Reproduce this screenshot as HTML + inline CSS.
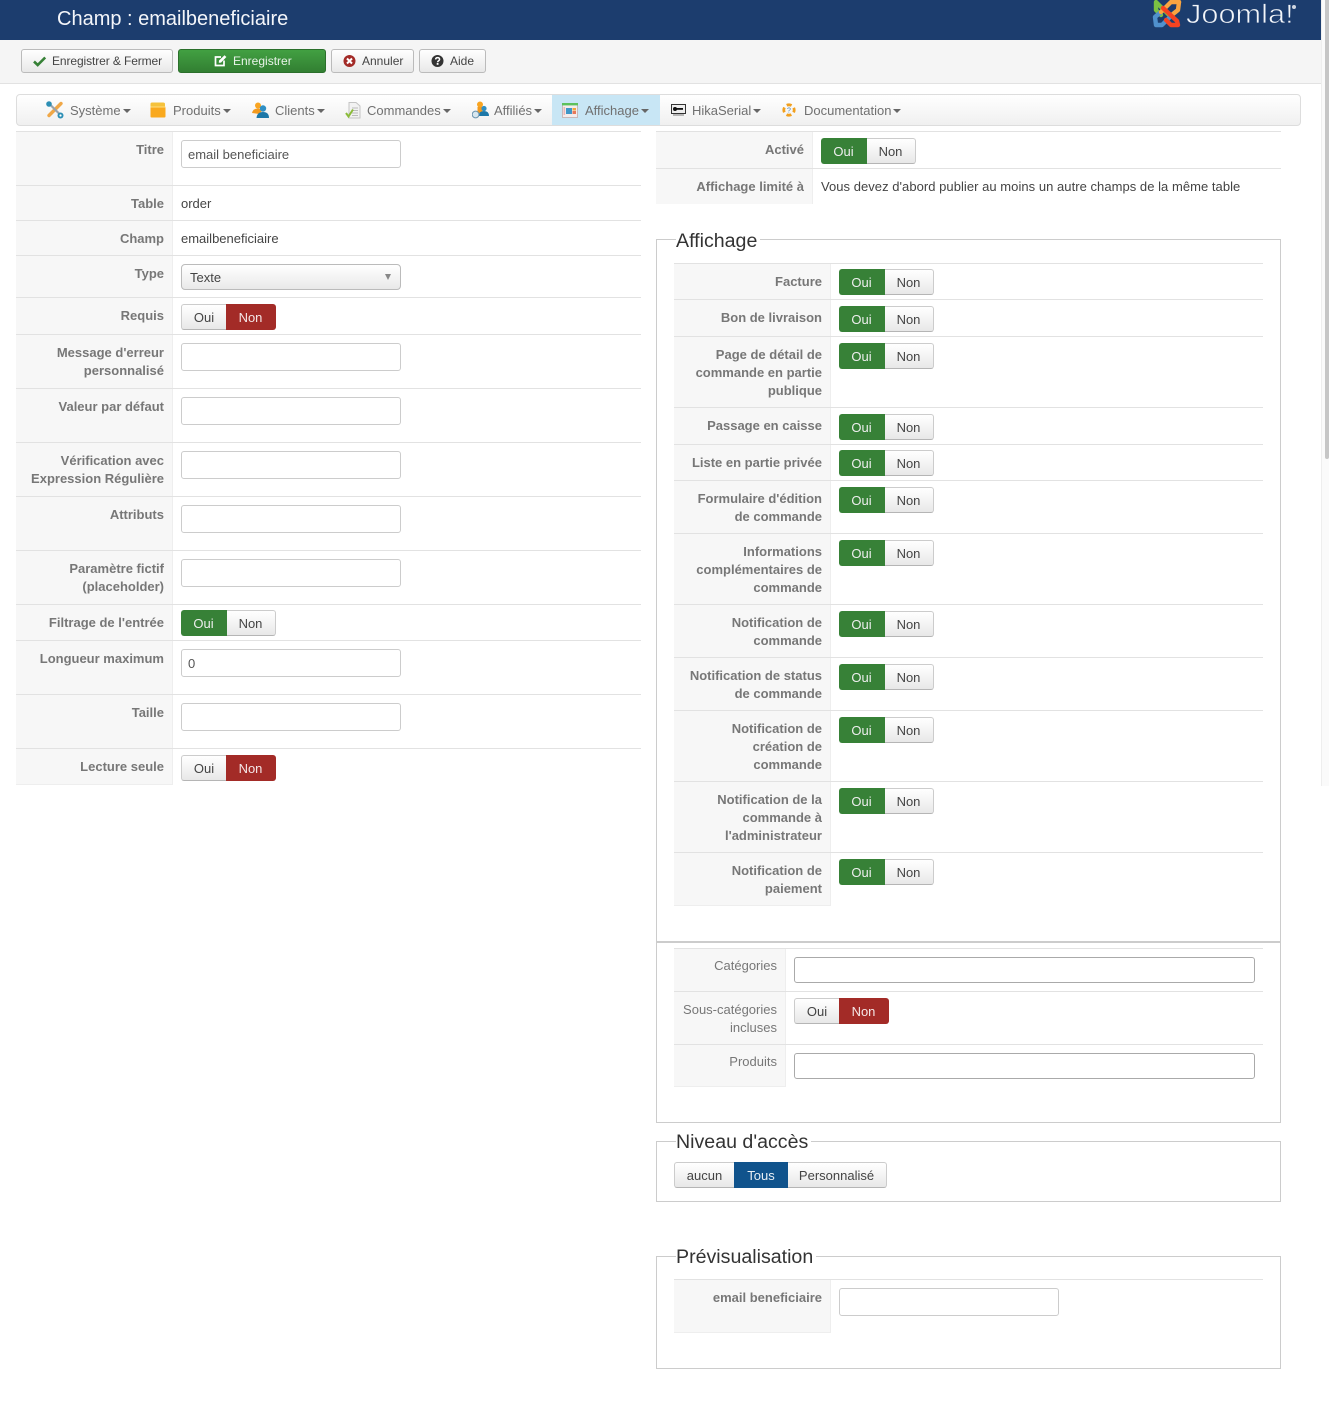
<!DOCTYPE html>
<html lang="fr"><head><meta charset="utf-8"><title>Champ : emailbeneficiaire</title>
<style>
html,body{margin:0;padding:0;background:#fff}
body{position:relative;width:1329px;height:1417px;overflow:hidden;font-family:"Liberation Sans",sans-serif;font-size:13px;color:#444}
div,span,svg{box-sizing:border-box}
.a{position:absolute}
.hd{position:absolute;left:0;top:0;width:1321px;height:40px;background:#1c3d6e}
.ttl{position:absolute;left:57px;top:7px;color:#f4f6fa;font-size:20px;line-height:24px;white-space:nowrap}
.tb{position:absolute;left:0;top:40px;width:1321px;height:44px;background:#f5f5f5;border-bottom:1px solid #e2e2e2}
.b{position:absolute;top:49px;height:24px;border:1px solid #bbb;border-radius:3px;background:linear-gradient(#fff,#e8e8e8);color:#444;font-size:12px;line-height:23px;white-space:nowrap;text-align:left}
.b svg{position:absolute;top:4px}
.b span{position:absolute;top:0}
.mn{position:absolute;left:16px;top:94px;width:1285px;height:32px;border:1px solid #ddd;border-radius:4px;background:linear-gradient(#fff,#f0f0f0)}
.mi{position:absolute;top:103px;font-size:13px;line-height:15px;color:#707070;white-space:nowrap}
.mi:after{content:"";display:inline-block;margin-left:2px;vertical-align:2px;border-top:4px solid #666;border-left:4px solid transparent;border-right:4px solid transparent}
.ic{position:absolute}
.row{position:absolute;border-top:1px solid #e2e2e2}
.l{position:absolute;left:0;top:0;bottom:0;background:#f7f7f7;border-right:1px solid #eee;text-align:right;font-weight:bold;color:#777;line-height:18px;padding:9px 8px 0 4px}
.L{width:157px}.S{left:0;width:112px;font-weight:normal;padding-right:8px}
.e{border-bottom:1px solid #eee}
.w625{left:16px;width:625px}.r625{left:656px;width:625px}.w589{left:674px;width:589px}
.v{position:absolute;line-height:18px;white-space:nowrap}
.in{position:absolute;width:220px;height:28px;border:1px solid #ccc;border-radius:3px;background:#fff;color:#555;line-height:28px;padding-left:6px}
.in2{position:absolute;left:794px;width:461px;height:26px;border:1px solid #aaa;border-radius:3px;background:#fff}
.g{position:absolute;height:26px;display:flex;line-height:26px;font-size:13px;text-align:center;white-space:nowrap}
.g span{display:block;height:26px;border:1px solid #ccc;border-bottom-color:#b5b5b5;background:linear-gradient(#fff,#e8e8e8);color:#444}
.g span:first-child{border-radius:3px 0 0 3px;border-right:0}
.g span:last-child{border-radius:0 3px 3px 0;border-left:0}
.g span.on{background:#378137;border-color:#378137;color:#eee}
.g span.no{background:#a32b27;border-color:#a32b27;color:#f4e6e6}
.g span.bl{background:#10538c;border-color:#10538c;color:#e8eff5;border-radius:0;border-width:1px}
.y span:first-child,.n span:first-child{width:45px}.y span:last-child,.n span:last-child{width:50px}
.y span:first-child{width:46px;padding-right:2px}.y span:last-child{width:49px;padding-right:1px}
.fs{position:absolute;border:1px solid #ccc;background:transparent}
.lg{position:absolute;left:19px;top:-10px;background:#fff;padding:0 3px 0 0;font-size:19.6px;line-height:22px;color:#333;white-space:nowrap}
</style></head><body>

<div class="hd"></div>
<div class="ttl">Champ : emailbeneficiaire</div>

<!-- Joomla logo -->
<svg class="ic" style="left:1152px;top:0" width="31" height="29" viewBox="0 0 31 29" fill="none" stroke-linecap="round" stroke-linejoin="round">
<path d="M4 2 L4 10 L9 15 M4 2 L17 15" stroke="#7ac143" stroke-width="4.4"/>
<path d="M4 25 L10 25 L20 15 M4 25 L3 17 L9 12" stroke="#5091cd" stroke-width="4.4"/>
<path d="M27 2 L19 2 L9 12" stroke="#f9a541" stroke-width="4.4"/>
<path d="M27 2 L26 10 L21 14" stroke="#f9a541" stroke-width="4.4"/>
<path d="M11 8 L25 21 L26 25 L19 25 L14 20" stroke="#f44321" stroke-width="4.4"/>
</svg>
<div class="a" style="left:1186px;top:-1px;font-size:26.5px;line-height:30px;color:#f2f5f9;white-space:nowrap;transform:scaleX(1.16);transform-origin:0 0;-webkit-text-stroke:.7px #1c3d6e">Joomla!</div>
<div class="a" style="left:1292px;top:5px;width:4px;height:4px;border-radius:2px;background:#cfd6e0"></div>

<div class="tb"></div>

<div class="b" style="left:21px;width:152px">
<svg style="left:11px" width="14" height="14" viewBox="0 0 14 14"><path d="M1 7.5 L4.7 11 L12.2 3.5" fill="none" stroke="#378137" stroke-width="2.6"/></svg>
<span style="left:30px;letter-spacing:-.1px">Enregistrer &amp; Fermer</span></div>
<div class="b" style="left:178px;width:148px;background:linear-gradient(#42a042,#327f32);border-color:#2b6f2b;color:#e9f3e9">
<svg style="left:35px" width="13" height="14" viewBox="0 0 13 14"><path d="M10 6.5 V11.5 H1.5 V3 H7" fill="none" stroke="#fff" stroke-width="1.7"/><path d="M5 6.5 L10.5 1.2 L12.4 3 L7 8.6 L4.8 8.8 Z" fill="#fff"/></svg>
<span style="left:54px">Enregistrer</span></div>
<div class="b" style="left:331px;width:83px">
<svg style="left:11px" width="13" height="14" viewBox="0 0 13 14"><circle cx="6.5" cy="7" r="6" fill="#a32b27"/><path d="M4 4.5 L9 9.5 M9 4.5 L4 9.5" stroke="#fff" stroke-width="2"/></svg>
<span style="left:30px">Annuler</span></div>
<div class="b" style="left:419px;width:67px">
<svg style="left:11px" width="13" height="14" viewBox="0 0 13 14"><circle cx="6.5" cy="7" r="6" fill="#333"/><path d="M4.6 5.4 C4.8 3 8.6 3 8.6 5.3 C8.6 6.8 6.6 6.6 6.6 8.2" fill="none" stroke="#fff" stroke-width="1.5"/><rect x="5.7" y="9" width="1.8" height="1.8" fill="#fff"/></svg>
<span style="left:30px">Aide</span></div>

<div class="mn"></div>
<div class="a" style="left:552px;top:95px;width:108px;height:30px;background:#c8e6f5"></div>

<!-- Système -->
<svg class="ic" style="left:46px;top:101px" width="18" height="18" viewBox="0 0 18 18"><path d="M15 2.5 L3 14.5" stroke="#f0a848" stroke-width="3.4" stroke-linecap="round"/><path d="M2.5 2 L14 13.5" stroke="#9aa3ab" stroke-width="2.2"/><circle cx="3" cy="3" r="2.8" fill="#2d8fb5"/><circle cx="14.5" cy="14.5" r="3" fill="#2d8fb5"/><circle cx="14.5" cy="14.5" r="1.1" fill="#fff"/></svg>
<div class="mi" style="left:70px">Système</div>
<!-- Produits -->
<svg class="ic" style="left:150px;top:102px" width="16" height="16" viewBox="0 0 16 16"><path d="M0.5 2 Q0.5 .5 2 .5 H13 Q15 .5 15 2 V5 H.5Z" fill="#f5c23c"/><rect x=".5" y="4.5" width="15" height="11" rx="1" fill="#f9a91e"/><rect x=".5" y="4.5" width="15" height="1" fill="#ffdf80"/></svg>
<div class="mi" style="left:173px">Produits</div>
<!-- Clients -->
<svg class="ic" style="left:252px;top:102px" width="17" height="16" viewBox="0 0 17 16"><circle cx="6" cy="3.5" r="3" fill="#f9a522"/><path d="M0 11 Q1 6.5 6 6.5 Q9 6.5 10 9 L7 12 Z" fill="#f39a1e"/><circle cx="11" cy="6.5" r="3.2" fill="#2f8fc4"/><path d="M4.5 16 Q5 10 11 10 Q17 10 17 16 Z" fill="#1d78a8"/></svg>
<div class="mi" style="left:275px">Clients</div>
<!-- Commandes -->
<svg class="ic" style="left:345px;top:102px" width="16" height="17" viewBox="0 0 16 17"><path d="M4 .5 H11 L15 4 V16 H4 Z" fill="#f2f2f2" stroke="#c4c4c4"/><path d="M7 6 H13 M7 8.5 H13 M7 11 H13 M7 13.5 H13" stroke="#bbb"/><path d="M1 11 L3.5 14.5 L8 7.5" fill="none" stroke="#8bbb3a" stroke-width="2"/></svg>
<div class="mi" style="left:367px">Commandes</div>
<!-- Affiliés -->
<svg class="ic" style="left:472px;top:101px" width="17" height="18" viewBox="0 0 17 18"><circle cx="8" cy="3.5" r="3" fill="#f9a522"/><rect x="5.5" y="6" width="5" height="6" fill="#f39a1e"/><circle cx="12" cy="7.5" r="2.6" fill="#2f8fc4"/><path d="M6.5 15 Q7 10 12 10 Q17 10 17 15 Z" fill="#1d78a8"/><circle cx="3.6" cy="13.5" r="3.4" fill="#d8e7ef" stroke="#6b93ad"/></svg>
<div class="mi" style="left:494px">Affiliés</div>
<!-- Affichage -->
<svg class="ic" style="left:562px;top:103px" width="16" height="15" viewBox="0 0 16 15"><rect x=".5" y=".5" width="15" height="14" fill="#f4ecec" stroke="#c8b8b8"/><rect width="16" height="2.4" fill="#5dc15d"/><rect x="4" y="5" width="6" height="6" fill="#3f97c8"/><rect x="10.5" y="5" width="3.5" height="2.5" fill="#f2a73a"/><rect x="10.5" y="8" width="3.5" height="3" fill="#e7785a"/><rect x="1.5" y="4" width="1.6" height="8" fill="#eab7b7"/></svg>
<div class="mi" style="left:585px">Affichage</div>
<!-- HikaSerial -->
<svg class="ic" style="left:671px;top:104px" width="15" height="12" viewBox="0 0 15 12"><rect x=".5" y=".5" width="14" height="9" fill="#eee" stroke="#333"/><path d="M2 11 H13" stroke="#777"/><circle cx="4" cy="5" r="2" fill="#111"/><rect x="5" y="4" width="7" height="1.8" fill="#111"/></svg>
<div class="mi" style="left:692px">HikaSerial</div>
<!-- Documentation -->
<svg class="ic" style="left:782px;top:103px" width="14" height="14" viewBox="0 0 14 14"><circle cx="7" cy="7" r="5.2" fill="none" stroke="#f2a01e" stroke-width="2.8" stroke-dasharray="5 3.17" stroke-dashoffset="2.5"/><text x="7" y="9.5" font-size="7" text-anchor="middle" fill="#3f7fb5" font-family="Liberation Sans">?</text></svg>
<div class="mi" style="left:804px">Documentation</div>

<!-- Left table -->
<div class="row w625" style="top:131px;height:55px"><div class="l L">Titre</div><div class="in" style="left:165px;top:8px">email beneficiaire</div></div>
<div class="row w625" style="top:185px;height:36px"><div class="l L">Table</div><div class="v" style="left:165px;top:9px">order</div></div>
<div class="row w625" style="top:220px;height:36px"><div class="l L">Champ</div><div class="v" style="left:165px;top:9px">emailbeneficiaire</div></div>
<div class="row w625" style="top:255px;height:43px"><div class="l L">Type</div><div class="a" style="left:165px;top:8px;width:220px;height:26px;border:1px solid #bbb;border-radius:4px;background:linear-gradient(#fff,#e9e9e9);line-height:26px;padding-left:8px;color:#444">Texte<span class="a" style="right:9px;top:9px;border-top:6px solid #888;border-left:3.5px solid transparent;border-right:3.5px solid transparent"></span></div></div>
<div class="row w625" style="top:297px;height:38px"><div class="l L">Requis</div><div class="g n" style="left:165px;top:6px"><span>Oui</span><span class="no">Non</span></div></div>
<div class="row w625" style="top:334px;height:55px"><div class="l L">Message d'erreur<br>personnalisé</div><div class="in" style="left:165px;top:8px"></div></div>
<div class="row w625" style="top:388px;height:55px"><div class="l L">Valeur par défaut</div><div class="in" style="left:165px;top:8px"></div></div>
<div class="row w625" style="top:442px;height:55px"><div class="l L">Vérification avec<br>Expression Régulière</div><div class="in" style="left:165px;top:8px"></div></div>
<div class="row w625" style="top:496px;height:55px"><div class="l L">Attributs</div><div class="in" style="left:165px;top:8px"></div></div>
<div class="row w625" style="top:550px;height:55px"><div class="l L">Paramètre fictif<br>(placeholder)</div><div class="in" style="left:165px;top:8px"></div></div>
<div class="row w625" style="top:604px;height:37px"><div class="l L">Filtrage de l'entrée</div><div class="g y" style="left:165px;top:5px"><span class="on">Oui</span><span>Non</span></div></div>
<div class="row w625" style="top:640px;height:55px"><div class="l L">Longueur maximum</div><div class="in" style="left:165px;top:8px">0</div></div>
<div class="row w625" style="top:694px;height:55px"><div class="l L">Taille</div><div class="in" style="left:165px;top:8px"></div></div>
<div class="row w625" style="top:748px;height:37px"><div class="l L e">Lecture seule</div><div class="g n" style="left:165px;top:6px"><span>Oui</span><span class="no">Non</span></div></div>

<!-- Right top -->
<div class="row r625" style="top:131px;height:38px"><div class="l L">Activé</div><div class="g y" style="left:165px;top:6px"><span class="on">Oui</span><span>Non</span></div></div>
<div class="row r625" style="top:168px;height:36px"><div class="l L">Affichage limité à</div><div class="v" style="left:165px;top:9px;letter-spacing:.04px">Vous devez d'abord publier au moins un autre champs de la même table</div></div>

<!-- Affichage -->
<div class="fs" style="left:656px;top:239px;width:625px;height:884px"><div class="lg">Affichage</div></div>
<div class="a" style="left:656px;top:941px;width:625px;height:2px;background:#ccc"></div>

<div class="row w589" style="top:263px;height:37px"><div class="l L">Facture</div><div class="g y" style="left:165px;top:5px"><span class="on">Oui</span><span>Non</span></div></div>
<div class="row w589" style="top:299px;height:38px"><div class="l L">Bon de livraison</div><div class="g y" style="left:165px;top:6px"><span class="on">Oui</span><span>Non</span></div></div>
<div class="row w589" style="top:336px;height:72px"><div class="l L">Page de détail de<br>commande en partie<br>publique</div><div class="g y" style="left:165px;top:6px"><span class="on">Oui</span><span>Non</span></div></div>
<div class="row w589" style="top:407px;height:38px"><div class="l L">Passage en caisse</div><div class="g y" style="left:165px;top:6px"><span class="on">Oui</span><span>Non</span></div></div>
<div class="row w589" style="top:444px;height:37px"><div class="l L">Liste en partie privée</div><div class="g y" style="left:165px;top:5px"><span class="on">Oui</span><span>Non</span></div></div>
<div class="row w589" style="top:480px;height:54px"><div class="l L">Formulaire d'édition<br>de commande</div><div class="g y" style="left:165px;top:6px"><span class="on">Oui</span><span>Non</span></div></div>
<div class="row w589" style="top:533px;height:72px"><div class="l L">Informations<br>complémentaires de<br>commande</div><div class="g y" style="left:165px;top:6px"><span class="on">Oui</span><span>Non</span></div></div>
<div class="row w589" style="top:604px;height:54px"><div class="l L">Notification de<br>commande</div><div class="g y" style="left:165px;top:6px"><span class="on">Oui</span><span>Non</span></div></div>
<div class="row w589" style="top:657px;height:54px"><div class="l L">Notification de status<br>de commande</div><div class="g y" style="left:165px;top:6px"><span class="on">Oui</span><span>Non</span></div></div>
<div class="row w589" style="top:710px;height:72px"><div class="l L">Notification de<br>création de<br>commande</div><div class="g y" style="left:165px;top:6px"><span class="on">Oui</span><span>Non</span></div></div>
<div class="row w589" style="top:781px;height:72px"><div class="l L">Notification de la<br>commande à<br>l'administrateur</div><div class="g y" style="left:165px;top:6px"><span class="on">Oui</span><span>Non</span></div></div>
<div class="row w589" style="top:852px;height:54px"><div class="l L e">Notification de<br>paiement</div><div class="g y" style="left:165px;top:6px"><span class="on">Oui</span><span>Non</span></div></div>

<!-- second table -->
<div class="row w589" style="top:948px;height:44px"><div class="l S" style="padding-top:8px">Catégories</div></div>
<div class="in2" style="top:957px"></div>
<div class="row w589" style="top:991px;height:54px"><div class="l S">Sous-catégories<br>incluses</div><div class="g n" style="left:120px;top:6px"><span>Oui</span><span class="no">Non</span></div></div>
<div class="row w589" style="top:1044px;height:43px"><div class="l S e" style="padding-top:8px">Produits</div></div>
<div class="in2" style="top:1053px"></div>

<!-- Niveau -->
<div class="fs" style="left:656px;top:1141px;width:625px;height:61px"><div class="lg" style="top:-11px">Niveau d'accès</div></div>
<div class="g" style="left:674px;top:1162px"><span style="width:60px">aucun</span><span class="bl" style="width:54px">Tous</span><span style="width:99px;padding-right:1px">Personnalisé</span></div>

<!-- Prévisualisation -->
<div class="fs" style="left:656px;top:1256px;width:625px;height:113px"><div class="lg" style="top:-11px">Prévisualisation</div></div>
<div class="row w589" style="top:1279px;height:54px"><div class="l L e">email beneficiaire</div><div class="in" style="left:165px;top:8px"></div></div>

<!-- scrollbar -->
<div class="a" style="left:1321px;top:0;width:8px;height:786px;background:#fafafa;border-left:1px solid #eee"></div>
<div class="a" style="left:1325px;top:0;width:4px;height:459px;background:#c6c6c6;border-radius:0 0 2px 2px"></div>

</body></html>
